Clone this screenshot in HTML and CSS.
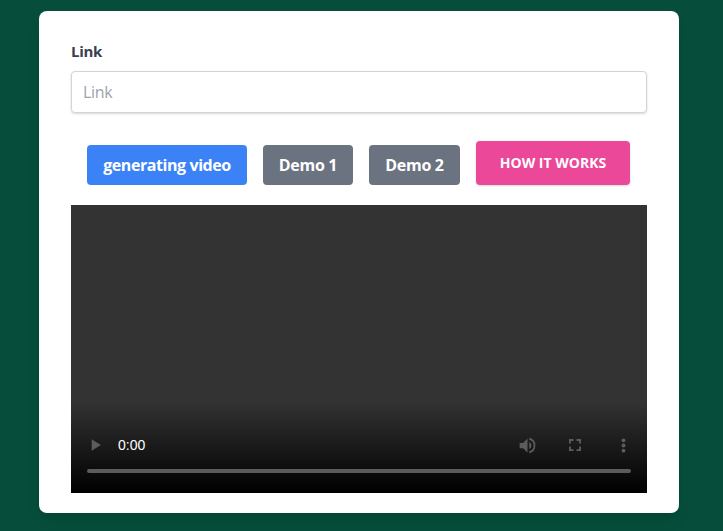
FILE: index.html
```html
<!DOCTYPE html>
<html lang="en">
<head>
<meta charset="utf-8">
<title>Link</title>
<link rel="stylesheet" href="styles.css">
</head>
<body>
<main class="card">
  <label class="label" for="link">Link</label>
  <input class="field" id="link" type="text" placeholder="Link">
  <div class="actions">
    <button class="btn generate">generating video</button>
    <button class="btn demo">Demo 1</button>
    <button class="btn demo wide">Demo 2</button>
    <button class="btn how">HOW IT WORKS</button>
  </div>
  <section class="player">
    <div class="controls">
      <div class="row">
        <span class="slot"><svg class="play" viewBox="0 0 24 24"><path d="M8 5v14l11-7z"/></svg></span>
        <span class="time">0:00</span>
        <span class="slot"><svg class="volume" viewBox="0 0 24 24"><path d="M3 9v6h4l5 5V4L7 9H3zm13.500 3A4.500 4.500 0 0 0 14 7.970v8.050A4.500 4.500 0 0 0 16.500 12zM14 3.230v2.060a7 7 0 0 1 0 13.420v2.060a9 9 0 0 0 0-17.540z"/></svg></span>
        <span class="slot"><svg class="full" viewBox="0 0 24 24"><path d="M6.500 14H4v6h6v-2.500H6.500V14zM4 10h2.500V6.500H10V4H4v6zm13.500 7.500H14V20h6v-6h-2.500v3.500zM14 4v2.500h3.500V10H20V4h-6z"/></svg></span>
        <span class="slot"><svg class="menu" viewBox="0 0 24 24"><circle cx="12" cy="5.500" r="2.400"/><circle cx="12" cy="12" r="2.400"/><circle cx="12" cy="18.500" r="2.400"/></svg></span>
      </div>
      <div class="track"></div>
    </div>
  </section>
</main>
</body>
</html>
```

FILE: styles.css
```css
* { box-sizing: border-box; }
body {
  margin: 0;
  height: 531px;
  overflow: hidden;
  padding: 11px 44px 18px 39px;
  background: #064e3b;
  font-family: "Segoe UI", "Open Sans", "Noto Sans", sans-serif;
  font-size: 16px;
  line-height: 24px;
}
.card {
  display: flex;
  flex-direction: column;
  width: 640px;
  height: 502px;
  padding: 32px 32px 20px;
  border-radius: 8px;
  background: #fff;
  box-shadow: 0 10px 15px -3px rgba(0, 0, 0, .1), 0 4px 6px -2px rgba(0, 0, 0, .05);
}
.label {
  height: 20px;
  margin-bottom: 8px;
  color: #374151;
  font-size: 15px;
  font-weight: 700;
  letter-spacing: -.3px;
  line-height: 17px;
}
.field {
  height: 42px;
  padding: 8px 12px 8px 11px;
  border: 1px solid #d1d5db;
  border-radius: 4px;
  box-shadow: 0 1px 3px rgba(0, 0, 0, .1), 0 1px 2px rgba(0, 0, 0, .06);
  font: inherit;
  letter-spacing: -.3px;
}
.field::placeholder { color: #9ca3af; opacity: 1; }
.actions {
  display: flex;
  align-items: flex-end;
  gap: 16px;
  height: 72px;
  padding: 0 16px;
}
.btn {
  display: flex;
  align-items: center;
  justify-content: center;
  height: 40px;
  padding: 0;
  border: 0;
  border-radius: 4px;
  color: #fff;
  font: inherit;
  font-weight: 700;
  white-space: nowrap;
}
.generate { width: 160px; background: #3b82f6; letter-spacing: -.42px; }
.demo { width: 90px; background: #6b7280; letter-spacing: -.3px; }
.wide { width: 91px; }
.how {
  width: 154px;
  height: 44px;
  background: #ec4899;
  box-shadow: 0 1px 3px rgba(0, 0, 0, .1), 0 1px 2px rgba(0, 0, 0, .06);
  font-size: 14px;
  letter-spacing: 0;
}
.player {
  display: flex;
  flex-direction: column;
  justify-content: flex-end;
  height: 288px;
  margin-top: 20px;
  background: #333;
}
.controls {
  height: 92px;
  padding-top: 20px;
  background: linear-gradient(to bottom, rgba(0, 0, 0, 0), #000);
}
.row {
  display: flex;
  align-items: center;
  height: 48px;
}
.slot {
  display: flex;
  align-items: center;
  justify-content: center;
  flex: 0 0 48px;
  height: 48px;
}
.slot svg { fill: #5c5c5c; }
.play { width: 20px; height: 20px; }
.volume { width: 21px; height: 21px; }
.full { width: 18px; height: 18px; }
.menu { width: 19px; height: 19px; }
.time {
  margin-right: auto;
  margin-left: -1px;
  color: #fff;
  font: 14px/20px "Liberation Sans", Arial, sans-serif;
}
.track {
  height: 4px;
  margin: 0 16px;
  border-radius: 2px;
  background: #5c5c5c;
}
```
